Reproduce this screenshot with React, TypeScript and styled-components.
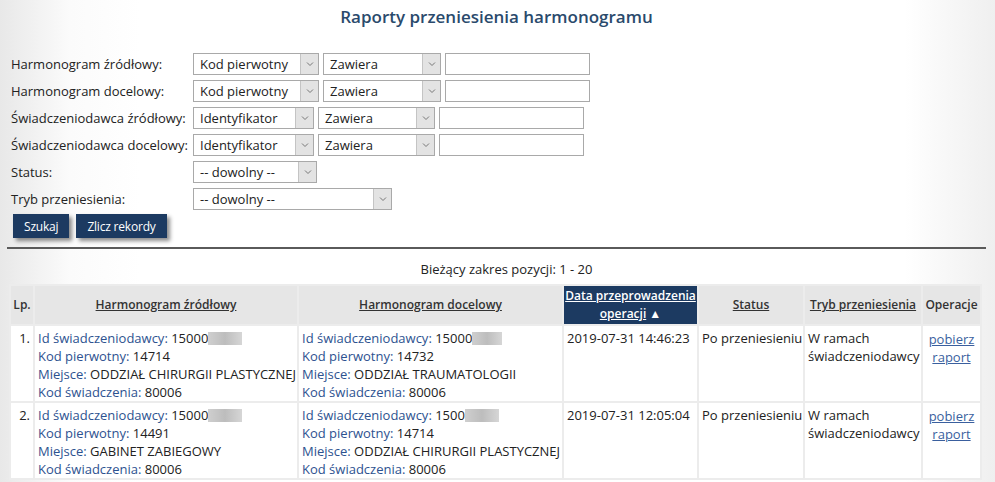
import { createGlobalStyle, styled } from "styled-components";

const GlobalStyle = createGlobalStyle`
  html, body {
    margin: 0;
    padding: 0;
  }
  body {
    font-family: "Open Sans", "Noto Sans", sans-serif;
    font-size: 13px;
    color: #222;
    background: linear-gradient(
      to right,
      #e8e8e8 0,
      #fbfbfb 70px,
      #fff 140px,
      #fff calc(100% - 90px),
      #efefef 100%
    );
    min-height: 482px;
  }
`;

const Page = styled.div`
  padding: 6px 9px 0 7px;
`;

const Title = styled.h1`
  margin: 0;
  text-align: center;
  font-size: 17px;
  font-weight: 600;
  color: #2a4a6c;
  line-height: 22px;
`;

const FilterGrid = styled.div`
  display: grid;
  grid-template-columns: 182px auto;
  row-gap: 5px;
  margin: 25px 0 0 4px;
  align-items: center;
`;

const Label = styled.div`
  line-height: 22px;
`;

const Controls = styled.div`
  display: flex;
  gap: 4px;
`;

const SelectBox = styled.div<{ $w: number }>`
  width: ${(p) => p.$w}px;
  height: 22px;
  box-sizing: border-box;
  border: 1px solid #a9a9a9;
  background: #fff;
  display: flex;
  align-items: stretch;
`;

const SelectText = styled.span`
  flex: 1;
  padding-left: 6px;
  line-height: 20px;
  white-space: nowrap;
  overflow: hidden;
`;

const Arrow = styled.span`
  width: 17px;
  border-left: 1px solid #c4c4c4;
  background: #e3e3e3;
  display: flex;
  align-items: center;
  justify-content: center;
`;

const TextInput = styled.div<{ $w: number }>`
  width: ${(p) => p.$w}px;
  height: 22px;
  box-sizing: border-box;
  border: 1px solid #a9a9a9;
  background: #fff;
`;

const Buttons = styled.div`
  display: flex;
  gap: 7px;
  margin: 4px 0 0 6px;
`;

const Button = styled.button`
  font-family: "Open Sans", sans-serif;
  font-size: 12px;
  color: #fff;
  background: #1c3a61;
  border: none;
  height: 24px;
  padding: 0 11px;
  box-shadow: 3px 3px 4px rgba(0, 0, 0, 0.45);
  letter-spacing: -0.2px;
`;

const Rule = styled.hr`
  border: none;
  height: 2px;
  background: #5a5a5a;
  margin: 9px 0 0 0;
`;

const RangeInfo = styled.div`
  text-align: center;
  margin: 11px 0 0 20px;
  line-height: 18px;
`;

const Table = styled.table`
  margin: 6px 0 0 2px;
  width: 973px;
  table-layout: fixed;
  border-collapse: separate;
  border-spacing: 2px;
  background: #ececec;
  line-height: 18px;
`;

const Th = styled.th<{ $active?: boolean }>`
  background: ${(p) => (p.$active ? "#1c3a61" : "#e6e6e6")};
  color: ${(p) => (p.$active ? "#fff" : "#333")};
  font-weight: 600;
  font-size: 12px;
  padding: 1px 0;
  height: 36px;
  text-align: center;
  line-height: 18px;
  white-space: nowrap;
`;

const SortLink = styled.span`
  text-decoration: underline;
`;

const Td = styled.td<{ $right?: boolean; $center?: boolean; $nowrap?: boolean }>`
  background: #fff;
  vertical-align: top;
  padding: 3px 3px 0;
  text-align: ${(p) => (p.$right ? "right" : p.$center ? "center" : "left")};
  white-space: ${(p) => (p.$nowrap ? "nowrap" : "normal")};
  overflow: hidden;
`;

const Key = styled.span`
  color: #2d5290;
`;

const Redacted = styled.span<{ $w: number }>`
  display: inline-block;
  width: ${(p) => p.$w}px;
  height: 13px;
  vertical-align: -2px;
  background: linear-gradient(to right, #cfcfcf, #bdbdbd 50%, #d6d6d6);
  filter: blur(0.6px);
`;

const Link = styled.a`
  color: #3a5f9e;
  text-decoration: underline;
  display: block;
  margin-top: 1px;
`;

const Chevron = () => (
  <svg width="8" height="6" viewBox="0 0 8 6">
    <path d="M1 1.5 L4 4.5 L7 1.5" fill="none" stroke="#777" strokeWidth="1" />
  </svg>
);

const Select = ({ w, text }: { w: number; text: string }) => (
  <SelectBox $w={w}>
    <SelectText>{text}</SelectText>
    <Arrow>
      <Chevron />
    </Arrow>
  </SelectBox>
);

type Harm = { idPrefix: string; redW: number; kod: string; miejsce: string; swiad: string };

const HarmCell = ({ h }: { h: Harm }) => (
  <Td $nowrap>
    <div>
      <Key>Id świadczeniodawcy:</Key> {h.idPrefix}
      <Redacted $w={h.redW} />
    </div>
    <div>
      <Key>Kod pierwotny:</Key> {h.kod}
    </div>
    <div>
      <Key>Miejsce:</Key> {h.miejsce}
    </div>
    <div>
      <Key>Kod świadczenia:</Key> {h.swiad}
    </div>
  </Td>
);

const rows = [
  {
    lp: "1.",
    src: { idPrefix: "15000", redW: 34, kod: "14714", miejsce: "ODDZIAŁ CHIRURGII PLASTYCZNEJ", swiad: "80006" },
    dst: { idPrefix: "15000", redW: 30, kod: "14732", miejsce: "ODDZIAŁ TRAUMATOLOGII", swiad: "80006" },
    date: "2019-07-31 14:46:23",
  },
  {
    lp: "2.",
    src: { idPrefix: "15000", redW: 34, kod: "14491", miejsce: "GABINET ZABIEGOWY", swiad: "80006" },
    dst: { idPrefix: "1500", redW: 34, kod: "14714", miejsce: "ODDZIAŁ CHIRURGII PLASTYCZNEJ", swiad: "80006" },
    date: "2019-07-31 12:05:04",
  },
];

const colWidths = [22, 262, 263, 133, 104, 116, 57];

export default function App() {
  return (
    <>
      <GlobalStyle />
      <Page>
        <Title>Raporty przeniesienia harmonogramu</Title>
        <FilterGrid>
          <Label>Harmonogram źródłowy:</Label>
          <Controls>
            <Select w={126} text="Kod pierwotny" />
            <Select w={118} text="Zawiera" />
            <TextInput $w={145} />
          </Controls>
          <Label>Harmonogram docelowy:</Label>
          <Controls>
            <Select w={126} text="Kod pierwotny" />
            <Select w={118} text="Zawiera" />
            <TextInput $w={145} />
          </Controls>
          <Label>Świadczeniodawca źródłowy:</Label>
          <Controls>
            <Select w={121} text="Identyfikator" />
            <Select w={117} text="Zawiera" />
            <TextInput $w={145} />
          </Controls>
          <Label>Świadczeniodawca docelowy:</Label>
          <Controls>
            <Select w={121} text="Identyfikator" />
            <Select w={117} text="Zawiera" />
            <TextInput $w={145} />
          </Controls>
          <Label>Status:</Label>
          <Controls>
            <Select w={124} text="-- dowolny --" />
          </Controls>
          <Label>Tryb przeniesienia:</Label>
          <Controls>
            <Select w={199} text="-- dowolny --" />
          </Controls>
        </FilterGrid>
        <Buttons>
          <Button>Szukaj</Button>
          <Button>Zlicz rekordy</Button>
        </Buttons>
        <Rule />
        <RangeInfo>Bieżący zakres pozycji: 1 - 20</RangeInfo>
        <Table>
          <colgroup>
            {colWidths.map((w, i) => (
              <col key={i} style={{ width: w }} />
            ))}
          </colgroup>
          <thead>
            <tr>
              <Th>Lp.</Th>
              <Th>
                <SortLink>Harmonogram źródłowy</SortLink>
              </Th>
              <Th>
                <SortLink>Harmonogram docelowy</SortLink>
              </Th>
              <Th $active>
                <SortLink>Data przeprowadzenia</SortLink>
                <br />
                <SortLink>operacji</SortLink> ▲
              </Th>
              <Th>
                <SortLink>Status</SortLink>
              </Th>
              <Th>
                <SortLink>Tryb przeniesienia</SortLink>
              </Th>
              <Th>Operacje</Th>
            </tr>
          </thead>
          <tbody>
            {rows.map((r) => (
              <tr key={r.lp}>
                <Td $right>{r.lp}</Td>
                <HarmCell h={r.src} />
                <HarmCell h={r.dst} />
                <Td $nowrap>{r.date}</Td>
                <Td $nowrap>Po przeniesieniu</Td>
                <Td>W ramach świadczeniodawcy</Td>
                <Td $center>
                  <Link href="#">pobierz raport</Link>
                </Td>
              </tr>
            ))}
          </tbody>
        </Table>
      </Page>
    </>
  );
}
